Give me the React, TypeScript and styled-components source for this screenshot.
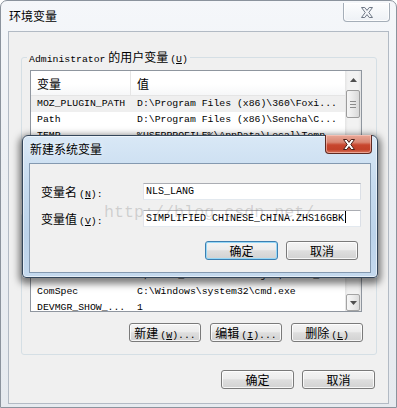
import React from "react";
import styled, { createGlobalStyle } from "styled-components";

const uiFont = `"Noto Sans CJK SC", "Liberation Sans", sans-serif`;
const monoFont = `"Liberation Mono", "DejaVu Sans Mono", monospace`;

const GlobalStyle = createGlobalStyle`
  html, body {
    margin: 0;
    padding: 0;
    background: #ffffff;
  }
  body {
    width: 397px;
    height: 408px;
    overflow: hidden;
    font-family: ${uiFont};
    font-size: 12px;
    color: #000;
  }
`;

interface EnvVar {
  name: string;
  value: string;
}

const userVars: EnvVar[] = [
  { name: "MOZ_PLUGIN_PATH", value: "D:\\Program Files (x86)\\360\\Foxit Reader\\plugins\\" },
  { name: "Path", value: "D:\\Program Files (x86)\\Sencha\\Cmd\\4.0.2.67" },
  { name: "TEMP", value: "%USERPROFILE%\\AppData\\Local\\Temp" },
  { name: "TMP", value: "%USERPROFILE%\\AppData\\Local\\Temp" },
];

const systemVars: EnvVar[] = [
  { name: "asl.log", value: "Destination=file" },
  { name: "CLASSPATH", value: ".;%JAVA_HOME%\\lib\\dt.jar;%JAVA_HOME%\\lib\\tools.jar" },
  { name: "ComSpec", value: "C:\\Windows\\system32\\cmd.exe" },
  { name: "DEVMGR_SHOW_DETAILS", value: "1" },
  { name: "FP_NO_HOST_CHECK", value: "NO" },
];

// windows list view cuts long text with three dots
const fit = (text: string, max: number) =>
  text.length > max ? text.slice(0, max - 3) + "..." : text;

/* ---------- outer window ---------- */

const Window = styled.div`
  position: relative;
  box-sizing: border-box;
  width: 397px;
  height: 408px;
  display: flex;
  flex-direction: column;
  border: 1px solid #8b939d;
  border-radius: 7px 7px 0 0;
  background: linear-gradient(180deg, #f5f7fa 0%, #eceff3 40%, #e6eaef 100%);
`;

const TitleBar = styled.div`
  height: 30px;
  flex-shrink: 0;
  display: flex;
  align-items: flex-start;
  padding-left: 8px;
`;

const Title = styled.div`
  margin-top: 8px;
  line-height: 14px;
  font-size: 12px;
`;

const CaptionClose = styled.div<{ $active?: boolean }>`
  box-sizing: border-box;
  margin-left: auto;
  width: 47px;
  height: 19px;
  display: flex;
  align-items: center;
  justify-content: center;
  border: 1px solid ${(p) => (p.$active ? "#5e2a22" : "#a5aeb8")};
  border-top: none;
  border-radius: 0 0 4px 4px;
  background: ${(p) =>
    p.$active
      ? "linear-gradient(180deg, #e9a899 0%, #d98773 40%, #c8472f 55%, #c24129 80%, #d8765c 100%)"
      : "linear-gradient(180deg, rgba(255,255,255,0.75) 0%, rgba(236,240,244,0.8) 100%)"};
  box-shadow: inset 0 0 0 1px ${(p) => (p.$active ? "rgba(255,210,200,0.55)" : "rgba(255,255,255,0.8)")};
`;

const OuterClose = styled(CaptionClose)`
  margin-top: 2px;
  margin-right: 6px;
`;

const Client = styled.div`
  flex: 1;
  margin: 0 7px 3px;
  border: 1px solid #b2bac4;
  background: #f0f0f0;
  padding: 18px 13px 0 12px;
  display: flex;
  flex-direction: column;
`;

/* ---------- group boxes and list views ---------- */

const Group = styled.fieldset<{ $gap?: number }>`
  box-sizing: border-box;
  width: 356px;
  margin: ${(p) => p.$gap ?? 0}px 0 0;
  padding: 6px 13px 12px 8px;
  border: 1px solid #d5dfe5;
  border-radius: 3px;
  min-width: 0;
`;

const Legend = styled.legend`
  height: 14px;
  margin-left: -3px;
  padding: 0 2px;
  line-height: 14px;
  font-size: 12px;
  white-space: nowrap;
`;

const Mono = styled.span`
  font-family: ${monoFont};
  font-size: 9.8px;
`;

const KeyText = styled(Mono)`
  margin-left: 2px;
`;

// access key in brackets, e.g. (W)
const Key = ({ k, tail = "" }: { k: string; tail?: string }) => (
  <KeyText>
    (<u>{k}</u>){tail}
  </KeyText>
);

const ListView = styled.div<{ $height: number }>`
  box-sizing: border-box;
  width: 332px;
  height: ${(p) => p.$height}px;
  border: 1px solid #8f969f;
  background: #ffffff;
  display: grid;
  grid-template-columns: 1fr 16px;
  overflow: hidden;
`;

const ListArea = styled.div`
  min-width: 0;
  overflow: hidden;
`;

const HeaderRow = styled.div`
  display: grid;
  grid-template-columns: 100px 1fr;
  height: 24px;
  border-bottom: 1px solid #e5e5e5;
  background: linear-gradient(180deg, #ffffff 0%, #ffffff 55%, #f6f7f8 100%);
`;

const HeaderCell = styled.div<{ $divider?: boolean }>`
  box-sizing: border-box;
  display: flex;
  align-items: center;
  padding-left: 6px;
  font-size: 12px;
  border-right: ${(p) => (p.$divider ? "1px solid #e5e5e5" : "none")};
`;

const Row = styled.div<{ $selected?: boolean }>`
  display: grid;
  grid-template-columns: 100px 1fr;
  height: 16px;
  line-height: 16px;
  font-family: ${monoFont};
  font-size: 9.8px;
  background: ${(p) => (p.$selected ? "#efefef" : "transparent")};
`;

const Cell = styled.div`
  padding-left: 6px;
  white-space: pre;
  overflow: hidden;
`;

const ScrollBar = styled.div`
  display: flex;
  flex-direction: column;
  background: linear-gradient(90deg, #e4e4e4 0%, #f2f2f2 18%, #f2f2f2 82%, #e4e4e4 100%);
`;

const ScrollArrow = styled.div<{ $hot?: boolean }>`
  box-sizing: border-box;
  height: 17px;
  flex-shrink: 0;
  display: flex;
  align-items: center;
  justify-content: center;
  ${(p) =>
    p.$hot &&
    `
    margin: 0 1px;
    border: 1px solid #a3a3a3;
    border-radius: 2px;
    background: linear-gradient(90deg, #f7f7f7 0%, #ececec 50%, #dcdcdc 100%);
  `}
`;

const Track = styled.div`
  flex: 1;
  display: flex;
  flex-direction: column;
  padding: 0 1px;
`;

const Thumb = styled.div<{ $top: number; $size: number }>`
  box-sizing: border-box;
  margin-top: ${(p) => p.$top}px;
  height: ${(p) => p.$size}px;
  border: 1px solid #9c9c9c;
  border-radius: 2px;
  background: linear-gradient(90deg, #f6f6f6 0%, #e9e9e9 50%, #d9d9d9 100%);
  display: flex;
  flex-direction: column;
  align-items: center;
  justify-content: center;
  gap: 2px;
`;

const Grip = styled.span`
  width: 6px;
  height: 1px;
  background: #8c8c8c;
`;

const ButtonRow = styled.div<{ $top: number; $gap: number }>`
  display: flex;
  justify-content: flex-end;
  gap: ${(p) => p.$gap}px;
  margin-top: ${(p) => p.$top}px;
`;

const Button = styled.button<{ $default?: boolean; $width?: number }>`
  box-sizing: border-box;
  width: ${(p) => p.$width ?? 72}px;
  height: 19px;
  margin: 0;
  padding: 0;
  font-family: ${uiFont};
  font-size: 12px;
  line-height: 17px;
  color: #000;
  white-space: nowrap;
  border: 1px solid ${(p) => (p.$default ? "#3c7fb1" : "#7a7a7a")};
  border-radius: 3px;
  background: linear-gradient(180deg, #f4f4f4 0%, #ececec 45%, #dedede 52%, #d2d2d2 100%);
  box-shadow: inset 0 0 0 1px ${(p) => (p.$default ? "#97d8f7" : "rgba(255,255,255,0.8)")};
`;

const Arrow = ({ down }: { down?: boolean }) => (
  <svg width="7" height="4" viewBox="0 0 7 4">
    <path d={down ? "M0 0 L7 0 L3.5 4 Z" : "M3.5 0 L7 4 L0 4 Z"} fill="#4f4f4f" />
  </svg>
);

const CloseGlyph = ({ active }: { active?: boolean }) => (
  <svg width="14" height="11" viewBox="0 0 14 11">
    <path
      d="M1.5 0.5 L4.8 0.5 L7 3.4 L9.2 0.5 L12.5 0.5 L8.8 5.5 L12.5 10.5 L9.2 10.5 L7 7.6 L4.8 10.5 L1.5 10.5 L5.2 5.5 Z"
      fill={active ? "#ffffff" : "#f4f6f9"}
      stroke={active ? "#4a1f17" : "#6f7886"}
      strokeWidth="1"
      strokeLinejoin="round"
    />
  </svg>
);

interface VarListProps {
  rows: EnvVar[];
  height: number;
  selected?: number;
  thumbTop: number;
  thumbSize: number;
  hotDown?: boolean;
}

const VarList: React.FC<VarListProps> = ({ rows, height, selected, thumbTop, thumbSize, hotDown }) => (
  <ListView $height={height}>
    <ListArea>
      <HeaderRow>
        <HeaderCell $divider>变量</HeaderCell>
        <HeaderCell>值</HeaderCell>
      </HeaderRow>
      {rows.map((row, index) => (
        <Row key={row.name} $selected={index === selected}>
          <Cell>{fit(row.name, 15)}</Cell>
          <Cell>{fit(row.value, 34)}</Cell>
        </Row>
      ))}
    </ListArea>
    <ScrollBar>
      <ScrollArrow>
        <Arrow />
      </ScrollArrow>
      <Track>
        <Thumb $top={thumbTop} $size={thumbSize}>
          <Grip />
          <Grip />
          <Grip />
        </Thumb>
      </Track>
      <ScrollArrow $hot={hotDown}>
        <Arrow down />
      </ScrollArrow>
    </ScrollBar>
  </ListView>
);

/* ---------- new variable dialog ---------- */

const Dialog = styled.div`
  position: absolute;
  left: 21px;
  top: 134px;
  box-sizing: border-box;
  width: 356px;
  height: 143px;
  display: flex;
  flex-direction: column;
  border: 1px solid #34465a;
  border-radius: 6px 6px 4px 4px;
  background: linear-gradient(180deg, #d9e8f6 0%, #c6dbef 35%, #bcd3ea 70%, #c4d9ee 100%);
  box-shadow: 0 3px 7px 3px rgba(0, 0, 0, 0.5), inset 0 0 0 1px rgba(255, 255, 255, 0.55);
`;

const DialogTitleBar = styled.div`
  height: 27px;
  flex-shrink: 0;
  display: flex;
  align-items: flex-start;
  padding-left: 7px;
`;

const DialogTitle = styled.div`
  margin-top: 6px;
  line-height: 14px;
  font-size: 12px;
  text-shadow: 0 0 6px rgba(255, 255, 255, 0.9);
`;

const DialogClose = styled(CaptionClose)`
  margin-top: -1px;
  margin-right: 5px;
`;

const DialogClient = styled.div`
  flex: 1;
  margin: 0 6px 4px;
  border: 1px solid #8499b0;
  background: #f0f0f0;
  padding: 19px 0 0 11px;
`;

const Form = styled.div`
  display: grid;
  grid-template-columns: 102px 218px;
  row-gap: 10px;
  align-items: center;
`;

const FieldLabel = styled.div`
  height: 17px;
  font-size: 12px;
  line-height: 17px;
  white-space: nowrap;
`;

const TextBox = styled.div`
  box-sizing: border-box;
  height: 17px;
  padding: 0 2px;
  border: 1px solid;
  border-color: #abadb3 #dbdfe6 #e3e9ef #e2e3ea;
  background: #ffffff;
  font-family: ${monoFont};
  font-size: 10px;
  line-height: 15px;
  white-space: pre;
  overflow: hidden;
`;

const Caret = styled.span`
  display: inline-block;
  width: 1px;
  height: 12px;
  margin-left: 1px;
  vertical-align: -2px;
  background: #000;
`;

const DialogButtons = styled(ButtonRow)`
  grid-column: 1 / -1;
  padding-right: 3px;
`;

const Watermark = styled.div`
  position: absolute;
  left: 81px;
  top: 68px;
  font-family: ${monoFont};
  font-size: 16.7px;
  line-height: 18px;
  color: rgba(120, 120, 120, 0.28);
  white-space: nowrap;
  pointer-events: none;
`;

const App: React.FC = () => {
  return (
    <>
      <GlobalStyle />
      <Window>
        <TitleBar>
          <Title>环境变量</Title>
          <OuterClose>
            <CloseGlyph />
          </OuterClose>
        </TitleBar>
        <Client>
          <Group>
            <Legend>
              <Mono>Administrator</Mono> 的用户变量<Key k="U" />
            </Legend>
            <VarList rows={userVars} height={88} selected={0} thumbTop={2} thumbSize={28} />
            <ButtonRow $top={11} $gap={9}>
              <Button>新建<Key k="N" tail="..." /></Button>
              <Button>编辑<Key k="E" tail="..." /></Button>
              <Button>删除<Key k="D" /></Button>
            </ButtonRow>
          </Group>
          <Group $gap={5}>
            <Legend>系统变量<Key k="S" /></Legend>
            <VarList rows={systemVars} height={86} thumbTop={0} thumbSize={20} hotDown />
            <ButtonRow $top={11} $gap={9}>
              <Button>新建<Key k="W" tail="..." /></Button>
              <Button>编辑<Key k="I" tail="..." /></Button>
              <Button>删除<Key k="L" /></Button>
            </ButtonRow>
          </Group>
          <ButtonRow $top={15} $gap={8}>
            <Button $width={73}>确定</Button>
            <Button $width={73}>取消</Button>
          </ButtonRow>
        </Client>

        <Dialog>
          <DialogTitleBar>
            <DialogTitle>新建系统变量</DialogTitle>
            <DialogClose $active>
              <CloseGlyph active />
            </DialogClose>
          </DialogTitleBar>
          <DialogClient>
            <Form>
              <FieldLabel>变量名<Key k="N" tail=":" /></FieldLabel>
              <TextBox>NLS_LANG</TextBox>
              <FieldLabel>变量值<Key k="V" tail=":" /></FieldLabel>
              <TextBox>
                SIMPLIFIED CHINESE_CHINA.ZHS16GBK
                <Caret />
              </TextBox>
              <DialogButtons $top={4} $gap={8}>
                <Button $default $width={73}>确定</Button>
                <Button>取消</Button>
              </DialogButtons>
            </Form>
          </DialogClient>
          <Watermark>http://blog.csdn.net/</Watermark>
        </Dialog>
      </Window>
    </>
  );
};

export default App;
